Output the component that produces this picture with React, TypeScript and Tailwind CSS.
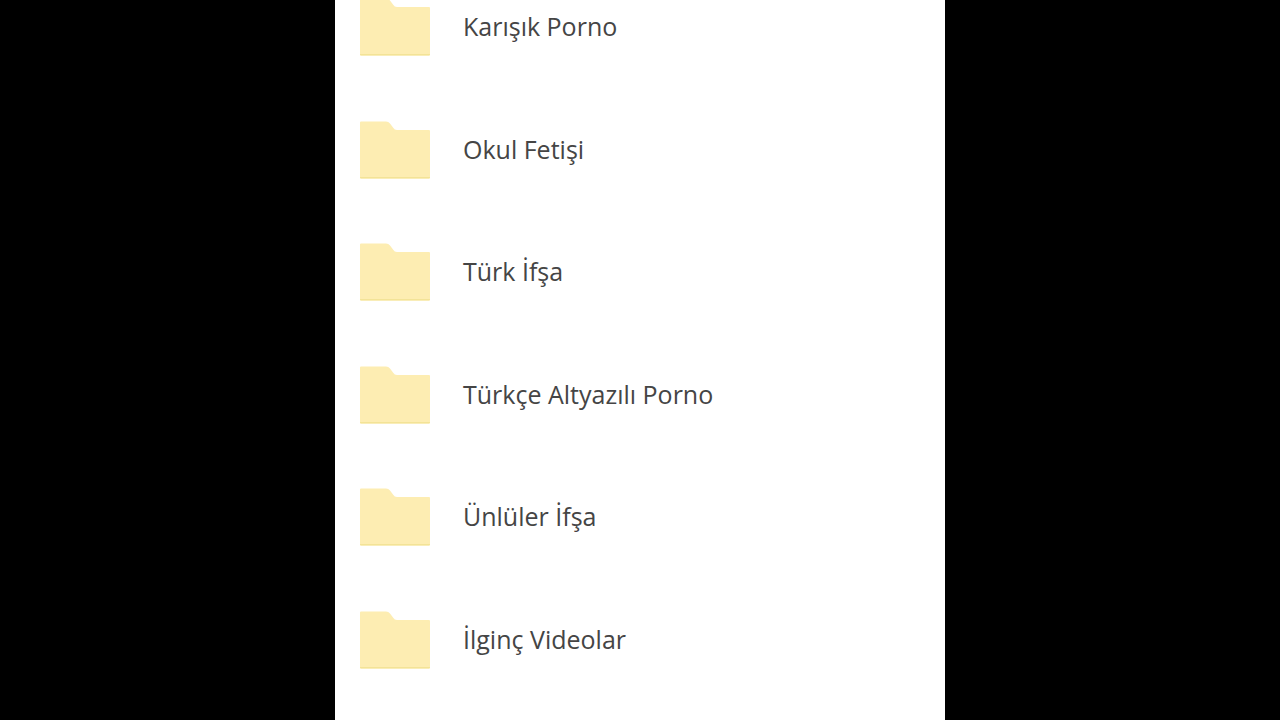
const folders = [
  "Karışık Porno",
  "Okul Fetişi",
  "Türk İfşa",
  "Türkçe Altyazılı Porno",
  "Ünlüler İfşa",
  "İlginç Videolar",
];

function FolderIcon() {
  return (
    <svg viewBox="0 0 70 58" className="h-[58px] w-[70px] shrink-0" aria-hidden="true">
      <path
        d="M0 1.500Q0 .5 1 .5H26Q28.500 .5 30 2.500L33 6.500Q34.500 9 37 9H69Q70 9 70 10V56.500Q70 57.500 69 57.500H1Q0 57.500 0 56.500Z"
        fill="#fdedb2"
      />
      <path d="M0 56V56.500Q0 57.500 1 57.500H69Q70 57.500 70 56.500V56Z" fill="#f3e397" />
    </svg>
  );
}

export default function App() {
  return (
    <div className="h-screen overflow-hidden bg-black">
      <main className="mx-auto h-full w-[48%] max-w-[610px] min-w-[320px] overflow-hidden bg-white">
        {/* List is scrolled, so the first row is cut off at the top */}
        <ul className="-mt-[34px] grid h-[735px] grid-rows-6 font-['Open_Sans',sans-serif]">
          {folders.map((name) => (
            <li key={name} className="flex items-center gap-[33px] pl-[25px]">
              <FolderIcon />
              <span className="pb-0.5 text-[25px] leading-8 text-[#454545]">{name}</span>
            </li>
          ))}
        </ul>
      </main>
    </div>
  );
}
